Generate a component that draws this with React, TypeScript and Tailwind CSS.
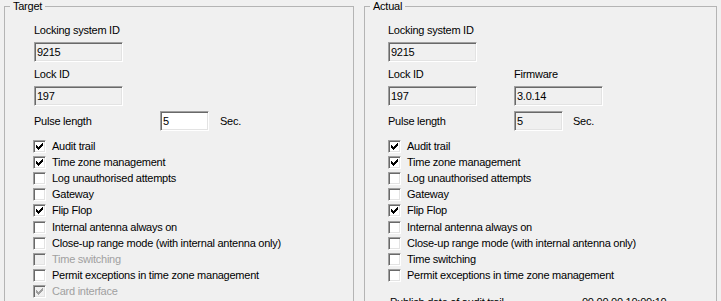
import React from "react";

const font = { fontFamily: '"Liberation Sans", Arial, sans-serif' };

function TextBox({ value, w, white }: { value: string; w: string; white?: boolean }) {
  return (
    <div
      className={`${w} h-[20px] border border-t-[#a0a0a0] border-l-[#a0a0a0] border-b-white border-r-white shadow-[inset_1px_1px_0_#696969,inset_-1px_-1px_0_#e3e3e3] ${
        white ? "bg-white" : "bg-[#f0f0f0]"
      } flex items-center pl-[2px] text-black`}
    >
      {value}
    </div>
  );
}

function CheckMark({ color }: { color: string }) {
  return (
    <svg width="13" height="13" viewBox="0 0 13 13" className="absolute -left-px -top-px" shapeRendering="crispEdges">
      <path
        d="M3 5h1v3h-1z M4 6h1v3h-1z M5 7h1v3h-1z M6 6h1v3h-1z M7 5h1v3h-1z M8 4h1v3h-1z M9 3h1v3h-1z"
        fill={color}
      />
    </svg>
  );
}

function CheckRow({ label, checked, disabled }: { label: string; checked?: boolean; disabled?: boolean }) {
  return (
    <div className="h-[16.2px] flex items-center">
      <div
        className={`relative w-[13px] h-[13px] shrink-0 border border-t-[#a0a0a0] border-l-[#a0a0a0] border-b-white border-r-white shadow-[inset_1px_1px_0_#696969,inset_-1px_-1px_0_#e3e3e3] ${
          disabled ? "bg-[#f0f0f0]" : "bg-white"
        }`}
      >
        {checked && <CheckMark color={disabled ? "#a0a0a0" : "#000"} />}
      </div>
      <span className={`ml-[6px] whitespace-nowrap ${disabled ? "text-[#a0a0a0]" : "text-black"}`}>{label}</span>
    </div>
  );
}

type Opt = { label: string; checked?: boolean; disabled?: boolean };

const targetOpts: Opt[] = [
  { label: "Audit trail", checked: true },
  { label: "Time zone management", checked: true },
  { label: "Log unauthorised attempts" },
  { label: "Gateway" },
  { label: "Flip Flop", checked: true },
  { label: "Internal antenna always on" },
  { label: "Close-up range mode (with internal antenna only)" },
  { label: "Time switching", disabled: true },
  { label: "Permit exceptions in time zone management" },
  { label: "Card interface", checked: true, disabled: true },
];

const actualOpts: Opt[] = [
  { label: "Audit trail", checked: true },
  { label: "Time zone management", checked: true },
  { label: "Log unauthorised attempts" },
  { label: "Gateway" },
  { label: "Flip Flop", checked: true },
  { label: "Internal antenna always on" },
  { label: "Close-up range mode (with internal antenna only)" },
  { label: "Time switching" },
  { label: "Permit exceptions in time zone management" },
];

function GroupBox({ title, w, children }: { title: string; w: string; children: React.ReactNode }) {
  return (
    <div className={`relative ${w} h-[310px] mt-[6px] border-l border-t border-r border-[#b4b4b4] shrink-0`}>
      <div className="absolute left-[5px] -top-[7px] px-[3px] bg-[#f0f0f0] text-black">{title}</div>
      {children}
    </div>
  );
}

export default function App() {
  return (
    <div
      className="w-[721px] h-[301px] overflow-hidden bg-[#f0f0f0] flex text-[11px] leading-[13px] tracking-[-0.25px]"
      style={font}
    >
      <div className="w-[4px] shrink-0" />
      <GroupBox title="Target" w="w-[350px]">
        <div className="pl-[29px] pt-[17px] text-black">
          <div>Locking system ID</div>
          <div className="mt-[5px]">
            <TextBox value="9215" w="w-[89px]" />
          </div>
          <div className="mt-[6px]">Lock ID</div>
          <div className="mt-[5px]">
            <TextBox value="197" w="w-[89px]" />
          </div>
          <div className="mt-[5px] flex items-center">
            <div className="w-[126px]">Pulse length</div>
            <TextBox value="5" w="w-[49px]" white />
            <div className="ml-[11px]">Sec.</div>
          </div>
          <div className="mt-[7px] -ml-px">
            {targetOpts.map((o) => (
              <CheckRow key={o.label} {...o} />
            ))}
          </div>
        </div>
      </GroupBox>
      <div className="w-[10px] shrink-0" />
      <GroupBox title="Actual" w="w-[353px]">
        <div className="pl-[23px] pt-[17px] text-black">
          <div>Locking system ID</div>
          <div className="mt-[5px]">
            <TextBox value="9215" w="w-[89px]" />
          </div>
          <div className="mt-[6px] flex">
            <div className="w-[126px]">Lock ID</div>
            <div>Firmware</div>
          </div>
          <div className="mt-[5px] flex">
            <div className="w-[126px]">
              <TextBox value="197" w="w-[89px]" />
            </div>
            <TextBox value="3.0.14" w="w-[89px]" />
          </div>
          <div className="mt-[5px] flex items-center">
            <div className="w-[126px]">Pulse length</div>
            <TextBox value="5" w="w-[49px]" />
            <div className="ml-[10px]">Sec.</div>
          </div>
          <div className="mt-[7px]">
            {actualOpts.map((o) => (
              <CheckRow key={o.label} {...o} />
            ))}
          </div>
          <div className="mt-[12px] flex whitespace-nowrap">
            <div className="w-[194px] pl-[2px]">Publish date of audit trail</div>
            <div>00.00.00 10:00:10</div>
          </div>
        </div>
      </GroupBox>
    </div>
  );
}
